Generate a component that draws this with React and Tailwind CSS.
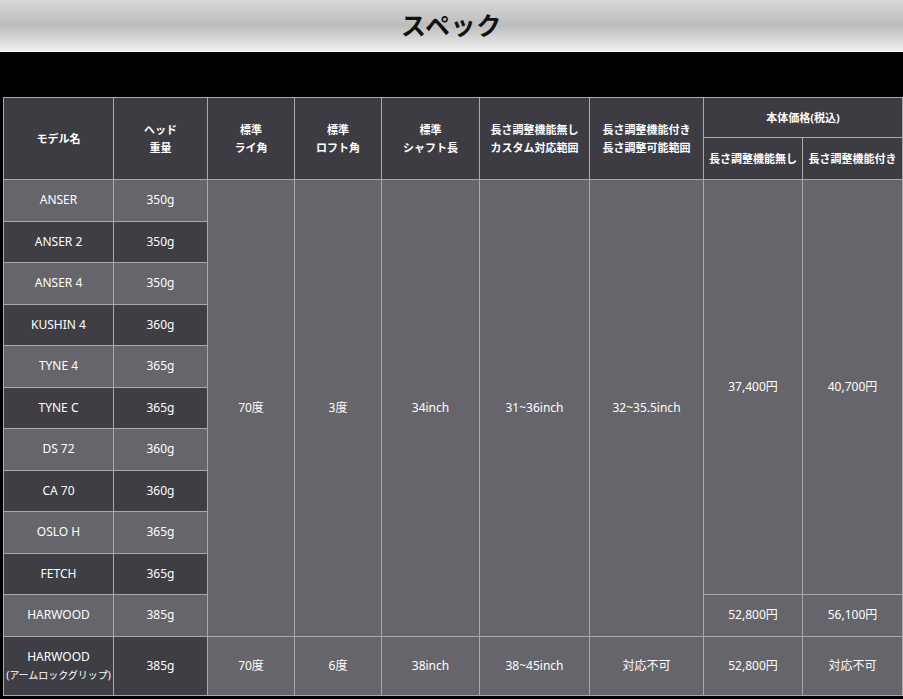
const models = [
  ['ANSER', '350g'],
  ['ANSER 2', '350g'],
  ['ANSER 4', '350g'],
  ['KUSHIN 4', '360g'],
  ['TYNE 4', '365g'],
  ['TYNE C', '365g'],
  ['DS 72', '360g'],
  ['CA 70', '360g'],
  ['OSLO H', '365g'],
  ['FETCH', '365g'],
];

const td = 'border border-[#a9a9ad] text-center align-middle text-[12px] text-white';
const light = 'bg-[#66656b]';
const dark = 'bg-[#3f3e44]';
const th = 'border border-[#a9a9ad] bg-[#3d3c43] text-center align-middle text-[11px] font-bold text-white leading-[18px]';

export default function App() {
  return (
    <div className="w-[903px] h-[699px] bg-black" style={{ fontFamily: '"Noto Sans", "Noto Sans CJK JP", sans-serif' }}>
      <div className="h-[52px] bg-gradient-to-b from-[#d8d8d8] via-[#bdbdbd] to-[#f0f0f0] flex items-center justify-center border-b border-white">
        <h1 className="text-[25px] font-bold text-[#111] tracking-wide">スペック</h1>
      </div>
      <div className="pt-[45px] pl-[3px]">
        <table className="border-collapse table-fixed w-[899px]">
          <colgroup>
            <col className="w-[110px]" />
            <col className="w-[94px]" />
            <col className="w-[87px]" />
            <col className="w-[87px]" />
            <col className="w-[98px]" />
            <col className="w-[110px]" />
            <col className="w-[114px]" />
            <col className="w-[99px]" />
            <col className="w-[100px]" />
          </colgroup>
          <thead>
            <tr className="h-[40px]">
              <th rowSpan={2} className={th}>モデル名</th>
              <th rowSpan={2} className={th}>ヘッド<br />重量</th>
              <th rowSpan={2} className={th}>標準<br />ライ角</th>
              <th rowSpan={2} className={th}>標準<br />ロフト角</th>
              <th rowSpan={2} className={th}>標準<br />シャフト長</th>
              <th rowSpan={2} className={th}>長さ調整機能無し<br />カスタム対応範囲</th>
              <th rowSpan={2} className={th}>長さ調整機能付き<br />長さ調整可能範囲</th>
              <th colSpan={2} className={th}>本体価格(税込)</th>
            </tr>
            <tr className="h-[42px]">
              <th className={th}>長さ調整機能無し</th>
              <th className={th}>長さ調整機能付き</th>
            </tr>
          </thead>
          <tbody>
            {models.map(([name, w], i) => (
              <tr key={name} className="h-[41.5px]">
                <td className={`${td} ${i % 2 === 0 ? light : dark}`}>{name}</td>
                <td className={`${td} ${i % 2 === 0 ? light : dark}`}>{w}</td>
                {i === 0 && (
                  <>
                    <td rowSpan={11} className={`${td} ${light}`}>70度</td>
                    <td rowSpan={11} className={`${td} ${light}`}>3度</td>
                    <td rowSpan={11} className={`${td} ${light}`}>34inch</td>
                    <td rowSpan={11} className={`${td} ${light}`}>31~36inch</td>
                    <td rowSpan={11} className={`${td} ${light}`}>32~35.5inch</td>
                    <td rowSpan={10} className={`${td} ${light}`}>37,400円</td>
                    <td rowSpan={10} className={`${td} ${light}`}>40,700円</td>
                  </>
                )}
              </tr>
            ))}
            <tr className="h-[41.5px]">
              <td className={`${td} ${light}`}>HARWOOD</td>
              <td className={`${td} ${light}`}>385g</td>
              <td className={`${td} ${light}`}>52,800円</td>
              <td className={`${td} ${light}`}>56,100円</td>
            </tr>
            <tr className="h-[59px]">
              <td className={`${td} ${dark} leading-[18px]`}>HARWOOD<br /><span className="text-[10px]">(アームロックグリップ)</span></td>
              <td className={`${td} ${dark}`}>385g</td>
              <td className={`${td} ${light}`}>70度</td>
              <td className={`${td} ${light}`}>6度</td>
              <td className={`${td} ${light}`}>38inch</td>
              <td className={`${td} ${light}`}>38~45inch</td>
              <td className={`${td} ${light}`}>対応不可</td>
              <td className={`${td} ${light}`}>52,800円</td>
              <td className={`${td} ${light}`}>対応不可</td>
            </tr>
          </tbody>
        </table>
      </div>
    </div>
  );
}
